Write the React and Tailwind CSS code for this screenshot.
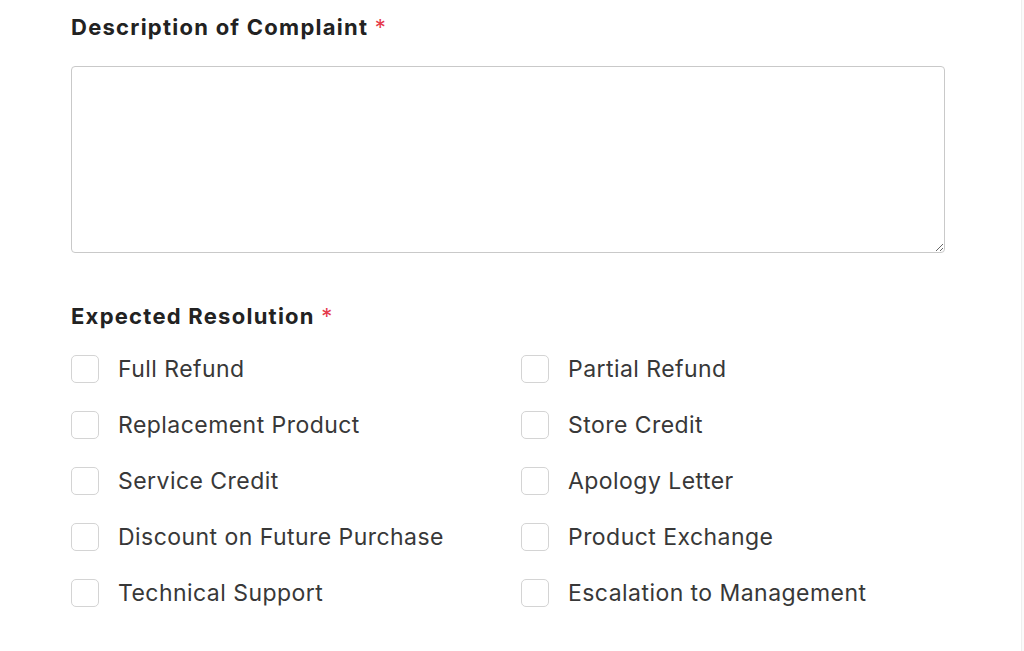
import { useState } from 'react';

const options = [
    'Full Refund',
    'Partial Refund',
    'Replacement Product',
    'Store Credit',
    'Service Credit',
    'Apology Letter',
    'Discount on Future Purchase',
    'Product Exchange',
    'Technical Support',
    'Escalation to Management',
];

function Label({ children }) {
    return (
        <h2 className="text-[22px] leading-[28px] font-bold text-[#222] tracking-[1.25px]">
            {children} <span className="text-[#e5394a] font-normal">*</span>
        </h2>
    );
}

export default function App() {
    const [checked, setChecked] = useState({});

    const toggle = (name) => setChecked((prev) => ({ ...prev, [name]: !prev[name] }));

    return (
        <div className="flex w-[1024px] h-[651px] bg-white font-['Inter',sans-serif] overflow-hidden">
            <div className="flex-1 pl-[71px] pt-[13px]">
                <div className="w-[874px]">
                    {/* Description */}
                    <Label>Description of Complaint</Label>
                    <textarea
                        className="mt-[25px] block w-full h-[187px] border border-[#c9c9c9] rounded-[4px] p-3 text-[18px] outline-none"
                    />

                    {/* Expected resolution */}
                    <div className="mt-[49px]">
                        <Label>Expected Resolution</Label>
                        <div className="mt-[25px] grid grid-cols-[450px_1fr] gap-y-[28px]">
                            {options.map((name) => (
                                <label key={name} className="flex items-center gap-[19px] h-[28px] cursor-pointer">
                                    <input
                                        type="checkbox"
                                        checked={!!checked[name]}
                                        onChange={() => toggle(name)}
                                        className="appearance-none w-[28px] h-[28px] border-[1.5px] border-[#d4d4d4] rounded-[5px] bg-white shrink-0"
                                    />
                                    <span className="text-[23px] text-[#383838] tracking-[0.45px]">{name}</span>
                                </label>
                            ))}
                        </div>
                    </div>
                </div>
            </div>
            <div className="w-[3px] border-l border-[#eeeeee] bg-[#fafafa]" />
        </div>
    );
}
